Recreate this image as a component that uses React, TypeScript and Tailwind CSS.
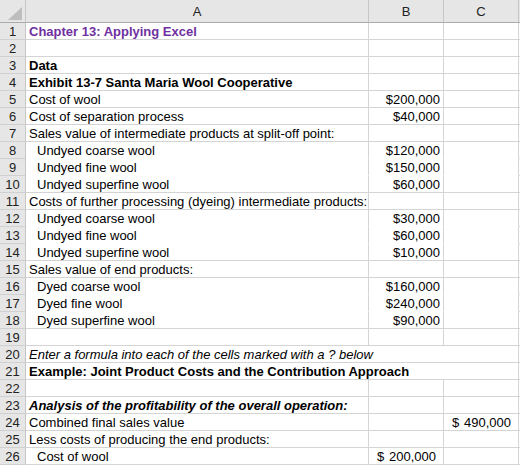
type Row = {
  a?: string;
  b?: string;
  c?: string;
  kind?: "title" | "bold" | "italic" | "bolditalic";
  indent?: boolean;
  open?: boolean;
  spill?: boolean;
  acct?: "b" | "c";
};

const rows: Row[] = [
  { a: "Chapter 13: Applying Excel", kind: "title" },
  {},
  { a: "Data", kind: "bold" },
  { a: "Exhibit 13-7 Santa Maria Wool Cooperative", kind: "bold" },
  { a: "Cost of wool", b: "$200,000" },
  { a: "Cost of separation process", b: "$40,000" },
  { a: "Sales value of intermediate products at split-off point:" },
  { a: "Undyed coarse wool", b: "$120,000", indent: true, open: true },
  { a: "Undyed fine wool", b: "$150,000", indent: true, open: true },
  { a: "Undyed superfine wool", b: "$60,000", indent: true },
  { a: "Costs of further processing (dyeing) intermediate products:" },
  { a: "Undyed coarse wool", b: "$30,000", indent: true, open: true },
  { a: "Undyed fine wool", b: "$60,000", indent: true, open: true },
  { a: "Undyed superfine wool", b: "$10,000", indent: true },
  { a: "Sales value of end products:" },
  { a: "Dyed coarse wool", b: "$160,000", indent: true, open: true },
  { a: "Dyed fine wool", b: "$240,000", indent: true, open: true },
  { a: "Dyed superfine wool", b: "$90,000", indent: true },
  {},
  { a: "Enter a formula into each of the cells marked with a ? below", kind: "italic", spill: true },
  { a: "Example: Joint Product Costs and the Contribution Approach", kind: "bold", spill: true },
  {},
  { a: "Analysis of the profitability of the overall operation:", kind: "bolditalic" },
  { a: "Combined final sales value", c: "490,000", acct: "c" },
  { a: "Less costs of producing the end products:" },
  { a: "Cost of wool", b: "200,000", acct: "b", indent: true },
];

function textStyle(kind?: Row["kind"]) {
  if (kind === "title") return "font-bold text-[#7030a0]";
  if (kind === "bold") return "font-bold";
  if (kind === "italic") return "italic";
  if (kind === "bolditalic") return "font-bold italic";
  return "";
}

function Money({ value, acct }: { value: string; acct: boolean }) {
  if (acct) {
    return (
      <div className="flex w-full justify-between pl-2 pr-[7px]">
        <span>$</span>
        <span>{value}</span>
      </div>
    );
  }
  return <div className="w-full pr-[3px] text-right">{value}</div>;
}

export default function App() {
  return (
    <div className="h-[466px] w-[520px] overflow-hidden bg-white font-['Liberation_Sans',Arial,sans-serif] text-[13px] leading-[15px] text-black">
      <div className="grid grid-cols-[26px_343px_75px_75px_1fr]">
        {/* column headers */}
        <div className="relative h-[23px] border-r border-b border-r-[#c6c6c6] border-b-[#ababab] bg-[#e6e6e6]">
          <svg width="14" height="13" viewBox="0 0 14 13" className="absolute right-[3px] bottom-[2px]">
            <polygon points="14,0 14,13 0,13" fill="#bdbdbd" />
          </svg>
        </div>
        {["A", "B", "C"].map((h) => (
          <div
            key={h}
            className="flex h-[23px] items-center justify-center border-r border-b border-r-[#c6c6c6] border-b-[#ababab] bg-[#e6e6e6] text-[#222]"
          >
            {h}
          </div>
        ))}
        <div className="h-[23px] border-b border-b-[#ababab] bg-[#e6e6e6]" />

        {rows.map((r, i) => {
          const bottom = r.open ? "border-b-white" : "border-b-[#d4d4d4]";
          return [
            <div
              key={`n${i}`}
              className="flex h-[17px] items-center justify-center border-r border-b border-r-[#c6c6c6] border-b-[#d0d0d0] bg-[#e6e6e6] text-[#222]"
            >
              {i + 1}
            </div>,
            <div
              key={`a${i}`}
              className={`flex h-[17px] items-center overflow-visible whitespace-nowrap border-r border-b border-r-[#d4d4d4] ${bottom} ${
                r.spill ? "col-span-3" : ""
              } ${r.indent ? "pl-[11px]" : "pl-[3px]"} ${textStyle(r.kind)}`}
            >
              {r.a}
            </div>,
            r.spill ? null : (
              <div
                key={`b${i}`}
                className={`flex h-[17px] items-center whitespace-nowrap border-r border-b border-r-[#d4d4d4] ${bottom}`}
              >
                {r.b && <Money value={r.b} acct={r.acct === "b"} />}
              </div>
            ),
            r.spill ? null : (
              <div
                key={`c${i}`}
                className={`flex h-[17px] items-center whitespace-nowrap border-r border-b border-r-[#d4d4d4] ${bottom}`}
              >
                {r.c && <Money value={r.c} acct={r.acct === "c"} />}
              </div>
            ),
            <div key={`d${i}`} className="h-[17px] border-b border-b-[#d4d4d4]" />,
          ];
        })}
      </div>
    </div>
  );
}
